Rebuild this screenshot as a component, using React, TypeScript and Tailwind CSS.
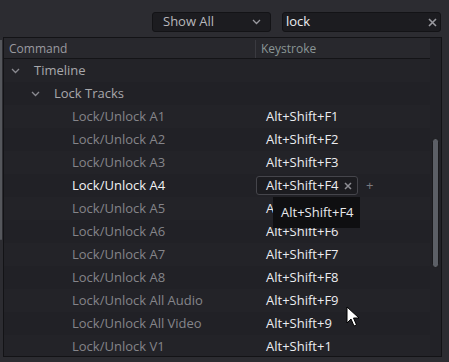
import React from 'react';

const rows = [
  { label: 'Lock/Unlock A1', key: 'Alt+Shift+F1' },
  { label: 'Lock/Unlock A2', key: 'Alt+Shift+F2' },
  { label: 'Lock/Unlock A3', key: 'Alt+Shift+F3' },
  { label: 'Lock/Unlock A4', key: 'Alt+Shift+F4', active: true },
  { label: 'Lock/Unlock A5', key: 'Alt+Shift+F5' },
  { label: 'Lock/Unlock A6', key: 'Alt+Shift+F6' },
  { label: 'Lock/Unlock A7', key: 'Alt+Shift+F7' },
  { label: 'Lock/Unlock A8', key: 'Alt+Shift+F8' },
  { label: 'Lock/Unlock All Audio', key: 'Alt+Shift+F9' },
  { label: 'Lock/Unlock All Video', key: 'Alt+Shift+9' },
  { label: 'Lock/Unlock V1', key: 'Alt+Shift+1' },
];

const Chevron = ({ className = '' }: { className?: string }) => (
  <svg width="9" height="6" viewBox="0 0 9 6" className={className}>
    <path d="M1 1 L4.5 4.5 L8 1" fill="none" stroke="currentColor" strokeWidth="1.3" />
  </svg>
);

const App = () => {
  return (
    <div
      className="relative w-[449px] h-[362px] overflow-hidden bg-[#2c2c31] text-[13px]"
      style={{ fontFamily: '"Open Sans", "Noto Sans", sans-serif' }}
    >
      {/* neighbouring panel scrollbar */}
      <div className="absolute left-0 top-[40px] w-[2px] h-[200px] rounded-b bg-[#55575c]" />

      {/* top bar */}
      <div className="h-[37px] flex items-end justify-end pr-[8px] pb-[5px] gap-[11px]">
        <div className="w-[119px] h-[20px] flex items-center justify-between pl-[10px] pr-[9px] rounded-[3px] bg-[#1c1c20] border border-[#131316] text-[#b8b8bc]">
          <span>Show All</span>
          <Chevron className="text-[#9a9aa0]" />
        </div>
        <div className="w-[159px] h-[20px] flex items-center justify-between pl-[3px] pr-[3px] rounded-[3px] bg-[#1c1c20] border border-[#131316] text-[#ececf0]">
          <span>lock</span>
          <svg width="9" height="9" viewBox="0 0 9 9" className="text-[#9a9aa0]">
            <path d="M1 1 L8 8 M8 1 L1 8" stroke="currentColor" strokeWidth="1.6" />
          </svg>
        </div>
      </div>

      {/* panel */}
      <div className="ml-[3px] mr-[7px] h-[320px] border border-[#131316] bg-[#222227] flex overflow-hidden">
        <div className="w-[426px] flex flex-col">
          <div className="h-[21px] pt-[2px] flex items-center bg-[#28282d] border-b border-[#141417] text-[12px] shrink-0">
            <div className="w-[251px] pl-[5px] text-[#9a9aa0]">Command</div>
            <div className="flex-1 h-full border-l border-[#3a3a40] pl-[5px] flex items-center text-[#8a9696]">Keystroke</div>
          </div>

          <div className="h-[23px] flex items-center shrink-0 bg-[#232328] text-[#a8a8ac]">
            <Chevron className="ml-[7px] mr-[14px] text-[#8a8a90]" />
            <span>Timeline</span>
          </div>
          <div className="h-[23px] flex items-center shrink-0 bg-[#212126] text-[#a8a8ac]">
            <Chevron className="ml-[27px] mr-[14px] text-[#8a8a90]" />
            <span>Lock Tracks</span>
          </div>

          {rows.map((r, i) => (
            <div
              key={r.label}
              className={`h-[23px] flex items-center shrink-0 ${i % 2 === 0 ? 'bg-[#232328]' : 'bg-[#212126]'}`}
            >
              <div className={`w-[252px] pl-[68px] ${r.active ? 'text-[#f2f2f4]' : 'text-[#85858a]'}`}>{r.label}</div>
              {r.active ? (
                <div className="flex items-center">
                  <div className="w-[102px] h-[19px] flex items-center justify-between pl-[9px] pr-[5px] rounded-[3px] bg-[#1c1c20] border border-[#45454b] text-[#ececf0]">
                    <span>{r.key}</span>
                    <svg width="8" height="8" viewBox="0 0 8 8" className="text-[#8e8e94]">
                      <path d="M1 1 L7 7 M7 1 L1 7" stroke="currentColor" strokeWidth="1.5" />
                    </svg>
                  </div>
                  <span className="ml-[8px] text-[#7a7a80]">+</span>
                </div>
              ) : (
                <div className="pl-[10px] text-[#ececf0]">{r.key}</div>
              )}
            </div>
          ))}
        </div>

        {/* scroll gutter */}
        <div className="flex-1 bg-[#222227] pl-[2px] pt-[100px]">
          <div className="w-[7px] h-[130px] rounded-full bg-[#5c5f66] border border-[#1a1a1d]" />
        </div>
      </div>

      {/* tooltip */}
      <div className="absolute left-[273px] top-[197px] w-[87px] h-[31px] bg-[#0f0f11] text-[#e8e8ec] flex items-center pl-[8px]">
        Alt+Shift+F4
      </div>

      {/* mouse cursor */}
      <svg className="absolute left-[346px] top-[306px]" width="14" height="22" viewBox="0 0 14 22">
        <path d="M1 1 L1 17 L5 13 L8 20 L10.5 19 L7.5 12 L13 12 Z" fill="#fff" stroke="#000" strokeWidth="1" />
      </svg>
    </div>
  );
};

export default App;
